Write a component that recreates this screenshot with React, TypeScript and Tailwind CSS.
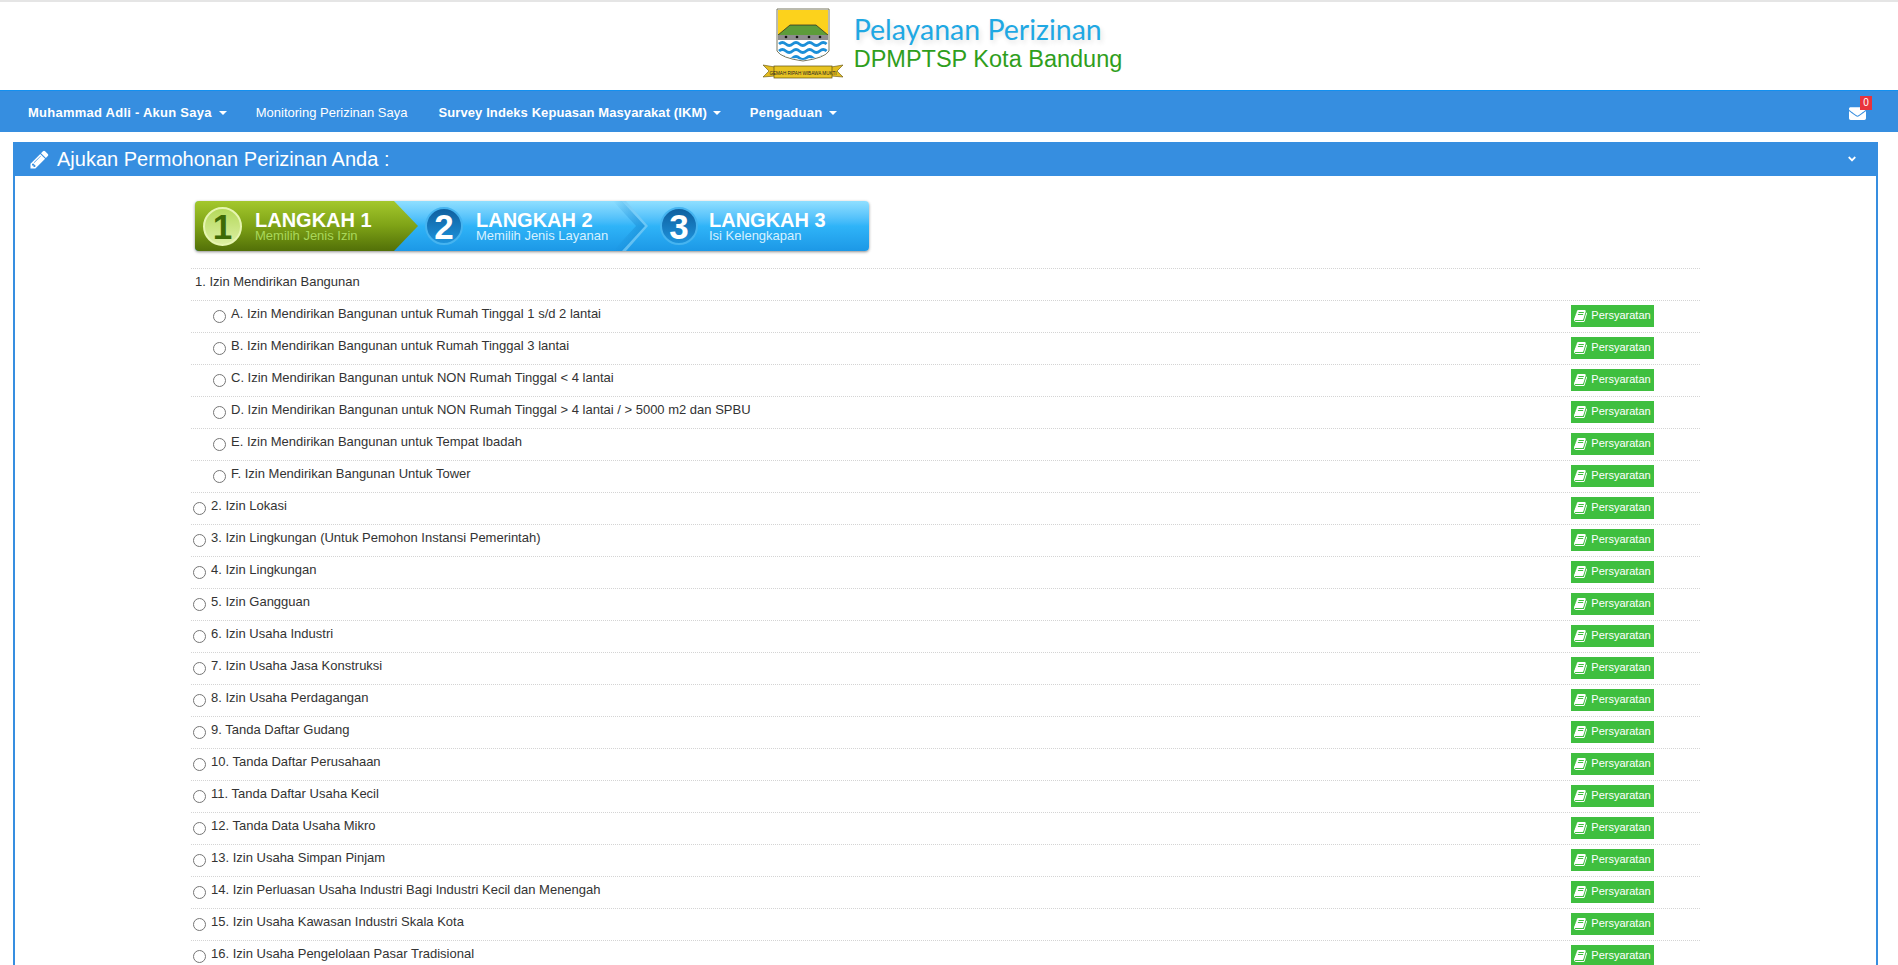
import React from "react";
import { FaAngleDown, FaEnvelope } from "react-icons/fa";

const sub = [
  "A. Izin Mendirikan Bangunan untuk Rumah Tinggal 1 s/d 2 lantai",
  "B. Izin Mendirikan Bangunan untuk Rumah Tinggal 3 lantai",
  "C. Izin Mendirikan Bangunan untuk NON Rumah Tinggal < 4 lantai",
  "D. Izin Mendirikan Bangunan untuk NON Rumah Tinggal > 4 lantai / > 5000 m2 dan SPBU",
  "E. Izin Mendirikan Bangunan untuk Tempat Ibadah",
  "F. Izin Mendirikan Bangunan Untuk Tower",
];
const main = [
  "2. Izin Lokasi",
  "3. Izin Lingkungan (Untuk Pemohon Instansi Pemerintah)",
  "4. Izin Lingkungan",
  "5. Izin Gangguan",
  "6. Izin Usaha Industri",
  "7. Izin Usaha Jasa Konstruksi",
  "8. Izin Usaha Perdagangan",
  "9. Tanda Daftar Gudang",
  "10. Tanda Daftar Perusahaan",
  "11. Tanda Daftar Usaha Kecil",
  "12. Tanda Data Usaha Mikro",
  "13. Izin Usaha Simpan Pinjam",
  "14. Izin Perluasan Usaha Industri Bagi Industri Kecil dan Menengah",
  "15. Izin Usaha Kawasan Industri Skala Kota",
  "16. Izin Usaha Pengelolaan Pasar Tradisional",
];

function BookIcon() {
  return (
    <svg viewBox="0 0 1792 1792" className="w-[14px] h-[14px] shrink-0" fill="currentColor">
      <path d="M1639 478q40 57 18 129l-275 906q-19 64-76.5 107.5t-122.5 43.5h-923q-77 0-148.5-53.5t-99.5-131.5q-24-67-2-127 0-4 3-27t4-37q1-8-3-21.5t-3-19.5q2-11 8-21t16.5-23.5 16.5-23.5q23-38 45-91.5t30-91.5q3-10 .5-30t-.5-28q3-11 17-28t17-23q21-36 42-92t25-90q1-9-2.5-32t.5-28q4-13 22-30.5t22-22.5q19-26 42.5-84.5t27.5-96.5q1-8-3-25.5t-2-26.5q2-8 9-18t18-23 17-21q8-12 16.5-30.5t15-35 16-36 19.5-32 26.5-23.5 36-11.5 47.5 5.5l-1 3q38-9 51-9h761q74 0 114 56t18 130l-274 906q-36 119-71.5 153.5t-128.5 34.5h-869q-27 0-38 15-11 16-1 43 24 70 144 70h923q29 0 56-15.5t35-41.5l300-987q7-22 5-57 38 15 59 43zm-1064 2q-4 13 2 22.5t20 9.5h608q13 0 25.5-9.5t16.5-22.5l21-64q4-13-2-22.5t-20-9.5h-608q-13 0-25.5 9.5t-16.5 22.5zm-83 256q-4 13 2 22.5t20 9.5h608q13 0 25.5-9.5t16.5-22.5l21-64q4-13-2-22.5t-20-9.5h-608q-13 0-25.5 9.5t-16.5 22.5z" />
    </svg>
  );
}

function PencilIcon() {
  return (
    <svg viewBox="0 0 1792 1792" className="w-[21px] h-[21px]" fill="currentColor">
      <path d="M491 1536l91-91-235-235-91 91v107h128v128h107zm523-928q0-22-22-22-10 0-17 7l-542 542q-7 7-7 17 0 22 22 22 10 0 17-7l542-542q7-7 7-17zm-54-192l416 416-832 832h-416v-416zm683 96q0 53-37 90l-166 166-416-416 166-165q36-38 90-38 53 0 91 38l235 234q37 39 37 91z" />
    </svg>
  );
}

function Logo() {
  const wave = (y: number, c: string) => (
    <path
      d={`M17 ${y} q3.4 -3 6.8 0 t6.8 0 t6.8 0 t6.8 0 t6.8 0 t6.8 0 t6.8 0`}
      stroke={c}
      strokeWidth="2.8"
      fill="none"
    />
  );
  return (
    <svg width="82" height="72" viewBox="0 0 82 72" className="shrink-0">
      <defs>
        <clipPath id="shield">
          <path d="M16 2 H66 V43 Q62 49 41 52 Q20 49 16 43 Z" />
        </clipPath>
      </defs>
      <path d="M15 1 H67 V43 Q63 50 41 53 Q19 50 15 43 Z" fill="#fff" stroke="#77775f" strokeWidth="1" />
      <g clipPath="url(#shield)">
        <path d="M15 2 H67 V30 H15 Z" fill="#fcd21c" />
        <path d="M16 27 L28 17 H54 L66 27 V31 H16 Z" fill="#5d9c3a" stroke="#222" strokeWidth="0.7" />
        <rect x="15" y="27" width="52" height="5" fill="#8d8d8d" />
        <circle cx="24" cy="29" r="1.3" fill="#111" />
        <circle cx="35" cy="29" r="1.3" fill="#111" />
        <circle cx="47" cy="29" r="1.3" fill="#111" />
        <circle cx="58" cy="29" r="1.3" fill="#111" />
        <rect x="15" y="32" width="52" height="24" fill="#fff" />
        {wave(36, "#1c8fd8")}
        {wave(43, "#1c8fd8")}
        {wave(50, "#1c8fd8")}
      </g>
      <path d="M1 57 L13 59 V68 L1 69 L7 63 Z" fill="#e3bc1e" stroke="#5f500e" strokeWidth="0.6" />
      <path d="M81 57 L69 59 V68 L81 69 L75 63 Z" fill="#e3bc1e" stroke="#5f500e" strokeWidth="0.6" />
      <rect x="12" y="58" width="58" height="12" fill="#e8c422" stroke="#5f500e" strokeWidth="0.7" />
      <text x="41" y="66.5" textAnchor="middle" fontSize="4.6" fill="#222" fontFamily="'Liberation Sans', sans-serif">
        GEMAH RIPAH WIBAWA MUKTI
      </text>
    </svg>
  );
}

function Circle({ n, green }: { n: number; green?: boolean }) {
  return (
    <div
      className={
        green
          ? "w-[39px] h-[39px] rounded-full shrink-0 flex items-center justify-center border-2 border-[#e6f5b0] bg-gradient-to-b from-[#b5d95a] to-[#dcefa0] text-[#3f6a05] text-[35px] font-bold leading-none"
          : "w-[38px] h-[38px] rounded-full shrink-0 flex items-center justify-center border-2 border-[#46b4f0] bg-gradient-to-b from-[#0f5f9f] to-[#1e93dc] text-white text-[35px] font-bold leading-none"
      }
    >
      {n}
    </div>
  );
}

function StepText({ title, text, green, gap }: { title: string; text: string; green?: boolean; gap: string }) {
  return (
    <div className={"flex flex-col mt-[1px] " + gap}>
      <span className="text-white text-[20px] font-bold leading-[20px] mt-[-1px]">{title}</span>
      <span className={(green ? "text-[#a9d75a]" : "text-[#d6f1ff]") + " text-[13px] leading-[14px] mt-[-1px]"}>{text}</span>
    </div>
  );
}

function ReqButton() {
  return (
    <button className="w-[83px] h-[22px] mt-[-2px] bg-[#3fbf3f] text-white text-[11px] flex items-center justify-center gap-[3px] ml-auto mr-[46px] shrink-0">
      <BookIcon />
      Persyaratan
    </button>
  );
}

function Row({ children, indent, radio, button = true }: { children: React.ReactNode; indent?: boolean; radio?: boolean; button?: boolean }) {
  return (
    <div className="h-[32px] border-t border-dotted border-[#d4d4d4] flex items-center text-[13px] text-[#333]">
      <div className={"flex items-center mt-[-6px] " + (indent ? "pl-[22px]" : radio ? "pl-[2px]" : "pl-[4px]")}>
        {radio && <input type="radio" name="izin" className="w-[13px] h-[13px] mr-[5px] mt-[6px] shrink-0" />}
        <span>{children}</span>
      </div>
      {button && <ReqButton />}
    </div>
  );
}

export default function App() {
  return (
    <div className="h-[965px] overflow-hidden bg-white font-['Liberation_Sans',Arial,sans-serif]">
      <div className="h-[2px] bg-[#e5e5e5]" />
      <header className="h-[88px] flex items-start justify-center pr-[14px]">
        <div className="flex items-start mt-[6px]">
          <Logo />
          <div className="ml-[10px] mt-[4px] flex flex-col">
            <span className="text-[28.5px] leading-[34px] text-[#1fa8e3] font-['Lato',sans-serif] [text-shadow:2px_3px_5px_rgba(0,0,0,0.12)]">
              Pelayanan Perizinan
            </span>
            <span className="text-[23.5px] leading-[26px] text-[#2f9e1c]">DPMPTSP Kota Bandung</span>
          </div>
        </div>
      </header>

      <nav className="h-[42px] bg-[#368ee0] border-t border-[#1390f0] flex items-center text-white text-[13px] pl-[28px] pr-[32px]">
        <span className="font-bold flex items-center mt-[2px] tracking-[0.25px]">
          Muhammad Adli - Akun Saya
          <span className="ml-[7px] mt-[1px] border-x-[4px] border-x-transparent border-t-[4px] border-t-white" />
        </span>
        <span className="ml-[29px] mt-[2px]">Monitoring Perizinan Saya</span>
        <span className="ml-[31px] font-bold flex items-center mt-[2px] tracking-[0.1px]">
          Survey Indeks Kepuasan Masyarakat (IKM)
          <span className="ml-[6px] mt-[1px] border-x-[4px] border-x-transparent border-t-[4px] border-t-white" />
        </span>
        <span className="ml-[29px] font-bold flex items-center mt-[2px] tracking-[0.3px]">
          Pengaduan
          <span className="ml-[6px] mt-[1px] border-x-[4px] border-x-transparent border-t-[4px] border-t-white" />
        </span>
        <span className="ml-auto relative mt-[3px]">
          <FaEnvelope className="w-[17px] h-[17px] text-white" />
          <span className="absolute left-[11px] top-[-9px] w-[12px] h-[14px] bg-[#e9333c] text-white text-[10px] leading-[14px] text-center">
            0
          </span>
        </span>
      </nav>

      <section className="mt-[10px] ml-[13px] mr-[20px] border-x-2 border-[#368ee0]">
        <div className="h-[34px] bg-[#368ee0] -mx-[2px] flex items-center text-white pl-[16px] pr-[20px]">
          <PencilIcon />
          <span className="ml-[7px] text-[20px]">Ajukan Permohonan Perizinan Anda :</span>
          <FaAngleDown className="ml-auto w-[12px] h-[12px]" />
        </div>
        <div className="pt-[25px] pl-[176px] pr-[176px]">
          <div className="ml-[4px] w-[674px] h-[50px] relative flex rounded-[4px] overflow-hidden bg-gradient-to-b from-[#8fdfff] via-[#2fb4f8] to-[#1c98e6] shadow-[0_1px_3px_rgba(0,0,0,0.45)]">
            <div className="w-[223px] h-full flex items-center pl-[8px] bg-gradient-to-b from-[#a4c82c] via-[#7ea216] to-[#527008] [clip-path:polygon(0_0,199px_0,223px_50%,199px_100%,0_100%)]">
              <Circle n={1} green />
              <StepText gap="ml-[13px]" title="LANGKAH 1" text="Memilih Jenis Izin" green />
            </div>
            <div className="w-[228px] h-full flex items-center pl-[7px]">
              <Circle n={2} />
              <StepText gap="ml-[13px]" title="LANGKAH 2" text="Memilih Jenis Layanan" />
            </div>
            <svg className="absolute left-[408px] top-0 w-[46px] h-[50px]" viewBox="0 0 46 50">
              <defs>
                <linearGradient id="chev" x1="0" x2="1" y1="0" y2="0">
                  <stop offset="0" stopColor="#1583cc" stopOpacity="0" />
                  <stop offset="1" stopColor="#1583cc" stopOpacity="0.55" />
                </linearGradient>
              </defs>
              <path d="M10 0 H19 L42 25 L19 50 H10 L33 25 Z" fill="url(#chev)" />
              <path d="M19 0 L42 25 L19 50 H23 L45 25 L23 0 Z" fill="#7fcdf5" opacity="0.7" />
            </svg>
            <div className="h-full flex items-center pl-[14px] relative">
              <Circle n={3} />
              <StepText gap="ml-[11px]" title="LANGKAH 3" text="Isi Kelengkapan" />
            </div>
          </div>

          <div className="mt-[17px] border-b border-dotted border-[#d4d4d4]">
            <Row button={false}>1. Izin Mendirikan Bangunan</Row>
            {sub.map((s) => (
              <Row key={s} indent radio>
                {s}
              </Row>
            ))}
            {main.map((s) => (
              <Row key={s} radio>
                {s}
              </Row>
            ))}
          </div>
        </div>
      </section>
    </div>
  );
}
